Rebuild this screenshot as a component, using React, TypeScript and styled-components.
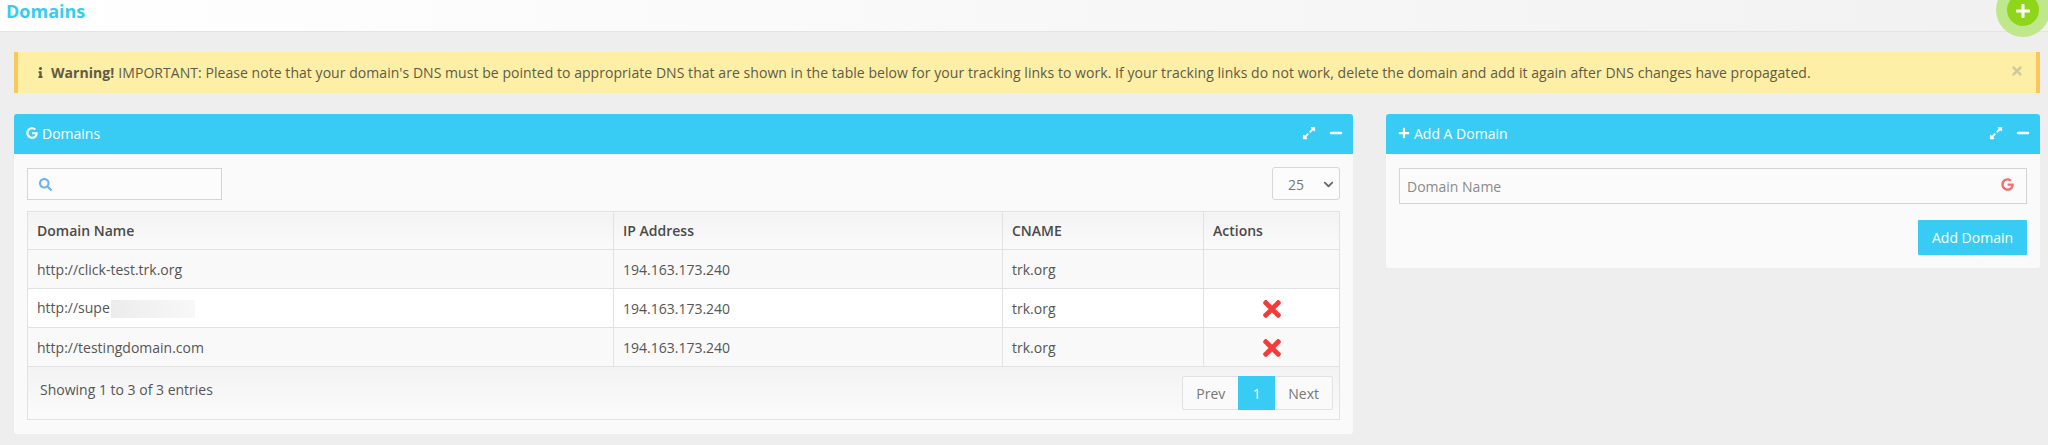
import React from 'react'
import styled, { createGlobalStyle } from 'styled-components';
import { FaChevronDown, FaExpandAlt, FaGoogle, FaInfo, FaMinus, FaPlus, FaSearch, FaTimes } from 'react-icons/fa';

const GlobalStyle = createGlobalStyle`
  html, body {
    margin: 0;
    padding: 0;
    background: #eeeeee;
    font-family: "Open Sans", "Liberation Sans", sans-serif;
    font-size: 14px;
    color: #555;
    overflow: hidden;
  }
  * { box-sizing: border-box; }
`;

const Page = styled.div`
  position: relative;
  width: 2048px;
  height: 445px;
  overflow: hidden;
`;

const TopBar = styled.header`
  height: 32px;
  padding-left: 6px;
  display: flex;
  align-items: flex-start;
  background: linear-gradient(to right, #ffffff, #f1f1f1);
  border-bottom: 1px solid #e4e4e4;
`;

const Title = styled.h1`
  margin: 0;
  font-size: 18px;
  line-height: 22px;
  font-weight: 700;
  color: #38ccf5;
`;

const FloatButton = styled.div`
  position: absolute;
  left: 2007px;
  top: -6px;
  width: 32px;
  height: 32px;
  border-radius: 50%;
  background: #8fd61a;
  box-shadow: 0 0 0 11px #bfe78c;
  color: #fff;
  display: flex;
  align-items: center;
  justify-content: center;
  font-size: 16px;
  padding-top: 1px;
`;

const Content = styled.main`
  padding: 20px 8px 0 14px;
`;

const Alert = styled.div`
  height: 41px;
  width: 2026px;
  display: flex;
  align-items: center;
  padding: 0 12px 0 17px;
  background: #feefa6;
  border-left: 4px solid #fcc75a;
  border-right: 4px solid #fcc75a;
  color: #5f5b45;
  font-size: 14px;
  letter-spacing: 0.05px;
  white-space: nowrap;

  svg { flex: none; }
  strong { font-weight: 700; margin: 0 4px 0 5px; }
`;

const AlertClose = styled.span`
  margin-left: auto;
  color: #cfc99c;
  display: flex;
  font-size: 14px;
  margin-top: -4px;
`;

const Columns = styled.div`
  display: grid;
  grid-template-columns: 1339px 654px;
  gap: 33px;
  margin-top: 21px;
  align-items: start;
`;

const Panel = styled.section`
  background: #fafafa;
  border-radius: 3px;
  overflow: hidden;
`;

const PanelHead = styled.div`
  height: 40px;
  background: #38ccf5;
  color: #fff;
  display: flex;
  align-items: center;
  padding: 0 10px 2px 12px;
  font-size: 14px;
  gap: 4px;
`;

const PanelTools = styled.div`
  margin-left: auto;
  display: flex;
  align-items: center;
  gap: 13px;
  font-size: 14px;
`;

const TableBody = styled.div`
  padding: 13px 13px 14px 13px;
`;

const TableTools = styled.div`
  display: flex;
  justify-content: space-between;
  align-items: center;
  height: 33px;
  margin-bottom: 11px;
`;

const SearchBox = styled.div`
  width: 195px;
  height: 32px;
  border: 1px solid #d4d4d4;
  background: #fcfcfc;
  display: flex;
  align-items: center;
  padding: 2px 0 0 11px;
  color: #6cb0f5;
  font-size: 13px;
`;

const PageSize = styled.div`
  width: 68px;
  height: 33px;
  border: 1px solid #d6d6d6;
  border-radius: 3px;
  background: #fcfcfc;
  display: flex;
  align-items: center;
  justify-content: space-between;
  padding: 1px 5px 0 15px;
  color: #777;
  font-size: 14px;

  svg { font-size: 11px; color: #666; }
`;

const Grid = styled.table`
  width: 100%;
  table-layout: fixed;
  border-collapse: collapse;
  border: 1px solid #e2e2e2;
  border-bottom: none;
`;

const HeadCell = styled.th`
  height: 38px;
  padding: 0 9px;
  text-align: left;
  font-weight: 600;
  color: #4a4a4a;
  border: 1px solid #e2e2e2;
  background: linear-gradient(to bottom, #f3f3f3, #fafafa);
`;

const Row = styled.tr<{ $white?: boolean }>`
  background: ${p => (p.$white ? '#ffffff' : '#f9f9f9')};
`;

const Cell = styled.td<{ $center?: boolean }>`
  height: 39px;
  padding: 0 9px;
  color: #555;
  border: 1px solid #e2e2e2;
  text-align: ${p => (p.$center ? 'center' : 'left')};

  svg { display: block; margin: 2px auto 0; color: #f63b3b; font-size: 26px; }
`;

const Masked = styled.span`
  display: inline-block;
  width: 84px;
  height: 18px;
  margin-left: 1px;
  vertical-align: middle;
  background: linear-gradient(to right, #ececec, #f8f8f8);
`;

const TableFoot = styled.div`
  height: 53px;
  display: flex;
  align-items: flex-start;
  justify-content: space-between;
  padding: 9px 6px 0 12px;
  border: 1px solid #e2e2e2;
  border-top: none;
  background: linear-gradient(to bottom, #f3f3f3, #fbfbfb);
`;

const Entries = styled.span`
  line-height: 27px;
  color: #555;
`;

const Pager = styled.div`
  display: flex;
  height: 34px;
  border: 1px solid #e2e2e2;
  border-radius: 2px;
  background: #fafafa;
`;

const PagerItem = styled.span<{ $active?: boolean }>`
  display: flex;
  align-items: center;
  justify-content: center;
  padding: 0 13px;
  min-width: 37px;
  margin: ${p => (p.$active ? '-1px 0' : '0')};
  color: ${p => (p.$active ? '#fff' : '#777')};
  background: ${p => (p.$active ? '#38ccf5' : 'transparent')};
`;

const FormBody = styled.div`
  padding: 14px 13px 13px;
`;

const Field = styled.div`
  height: 36px;
  border: 1px solid #d4d4d4;
  background: #fbfbfb;
  display: flex;
  align-items: center;
  justify-content: space-between;
  padding: 0 12px 0 7px;
  color: #8a8a8a;
  font-size: 14px;

  svg { color: #f56c6c; font-size: 13px; margin-top: -3px; }
`;

const FormActions = styled.div`
  display: flex;
  justify-content: flex-end;
  margin-top: 16px;
`;

const AddButton = styled.button`
  width: 109px;
  height: 35px;
  padding: 0;
  border: none;
  border-radius: 1px;
  background: #38ccf5;
  color: #fff;
  font-family: inherit;
  font-size: 14px;
`;

const rows = [
  { name: 'http://click-test.trk.org', removable: false },
  { name: 'http://supe', removable: true, masked: true },
  { name: 'http://testingdomain.com', removable: true },
];

const App: React.FC = () => {
  return (
    <Page>
      <GlobalStyle />
      <TopBar>
        <Title>Domains</Title>
      </TopBar>
      <FloatButton>
        <FaPlus />
      </FloatButton>
      <Content>
        <Alert>
          <FaInfo size={11} />
          <strong>Warning!</strong>
          IMPORTANT: Please note that your domain's DNS must be pointed to appropriate DNS that are shown in the table below for your tracking links to work. If your tracking links do not work, delete the domain and add it again after DNS changes have propagated.
          <AlertClose>
            <FaTimes />
          </AlertClose>
        </Alert>
        <Columns>
          <Panel>
            <PanelHead>
              <FaGoogle size={12} />
              Domains
              <PanelTools>
                <FaExpandAlt />
                <FaMinus />
              </PanelTools>
            </PanelHead>
            <TableBody>
              <TableTools>
                <SearchBox>
                  <FaSearch />
                </SearchBox>
                <PageSize>
                  25
                  <FaChevronDown />
                </PageSize>
              </TableTools>
              <Grid>
                <colgroup>
                  <col style={{ width: 586 }} />
                  <col style={{ width: 389 }} />
                  <col style={{ width: 201 }} />
                  <col />
                </colgroup>
                <thead>
                  <tr>
                    <HeadCell>Domain Name</HeadCell>
                    <HeadCell>IP Address</HeadCell>
                    <HeadCell>CNAME</HeadCell>
                    <HeadCell>Actions</HeadCell>
                  </tr>
                </thead>
                <tbody>
                  {rows.map((row, i) => (
                    <Row key={row.name} $white={i === 1}>
                      <Cell>
                        {row.name}
                        {row.masked && <Masked />}
                      </Cell>
                      <Cell>194.163.173.240</Cell>
                      <Cell>trk.org</Cell>
                      <Cell $center>{row.removable && <FaTimes />}</Cell>
                    </Row>
                  ))}
                </tbody>
              </Grid>
              <TableFoot>
                <Entries>Showing 1 to 3 of 3 entries</Entries>
                <Pager>
                  <PagerItem>Prev</PagerItem>
                  <PagerItem $active>1</PagerItem>
                  <PagerItem>Next</PagerItem>
                </Pager>
              </TableFoot>
            </TableBody>
          </Panel>
          <Panel>
            <PanelHead>
              <FaPlus size={12} />
              Add A Domain
              <PanelTools>
                <FaExpandAlt />
                <FaMinus />
              </PanelTools>
            </PanelHead>
            <FormBody>
              <Field>
                Domain Name
                <FaGoogle />
              </Field>
              <FormActions>
                <AddButton>Add Domain</AddButton>
              </FormActions>
            </FormBody>
          </Panel>
        </Columns>
      </Content>
    </Page>
  )
}

export default App;
